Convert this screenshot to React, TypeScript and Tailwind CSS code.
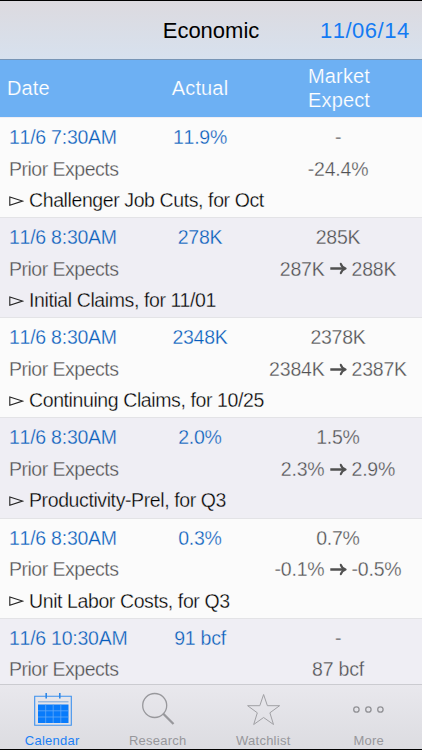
import React from "react";

type Release = {
  time: string;
  actual: string;
  expect: string;
  prior: string;
  revised?: string;
  title?: string;
};

const releases: Release[] = [
  { time: "11/6 7:30AM", actual: "11.9%", expect: "-", prior: "-24.4%", title: "Challenger Job Cuts, for Oct" },
  { time: "11/6 8:30AM", actual: "278K", expect: "285K", prior: "287K", revised: "288K", title: "Initial Claims, for 11/01" },
  { time: "11/6 8:30AM", actual: "2348K", expect: "2378K", prior: "2384K", revised: "2387K", title: "Continuing Claims, for 10/25" },
  { time: "11/6 8:30AM", actual: "2.0%", expect: "1.5%", prior: "2.3%", revised: "2.9%", title: "Productivity-Prel, for Q3" },
  { time: "11/6 8:30AM", actual: "0.3%", expect: "0.7%", prior: "-0.1%", revised: "-0.5%", title: "Unit Labor Costs, for Q3" },
  { time: "11/6 10:30AM", actual: "91 bcf", expect: "-", prior: "87 bcf" },
];

function Arrow() {
  return (
    <svg className="mx-[5px] h-[14px] w-[17px] shrink-0" viewBox="0 0 17 14" fill="none" stroke="#505050" strokeLinecap="round" strokeLinejoin="round">
      <path d="M0.3 6.5H14" strokeWidth="2.5" strokeLinecap="butt" />
      <path d="M10.8 1.8C11.6 4.2 13.2 5.8 15.6 6.5C13.2 7.2 11.6 8.8 10.8 11.2" strokeWidth="2.1" />
    </svg>
  );
}

function ReleaseRow({ item, shaded }: { item: Release; shaded: boolean }) {
  return (
    <div className={`h-[100.15px] shrink-0 border-b border-[#e3e3e6] pt-[4px] text-[19.5px] leading-[31.5px] ${shaded ? "bg-[#efeef4] [-webkit-text-stroke:0.3px_#efeef4]" : "bg-[#fbfbfb] [-webkit-text-stroke:0.3px_#fbfbfb]"}`}>
      <div className="grid grid-cols-[133px_116px_160px] pl-[9px] tracking-[-0.25px] [font-kerning:none]">
        <span className="whitespace-nowrap text-[#075cbb]">{item.time}</span>
        <span className="text-center text-[#075cbb]">{item.actual}</span>
        <span className="text-center text-[#505052]">{item.expect}</span>
      </div>
      <div className="grid grid-cols-[249px_160px] pl-[9px] text-[#505052]">
        <span className="tracking-[-0.5px]">Prior Expects</span>
        <span className="flex items-center justify-center whitespace-nowrap tracking-[-0.2px]">
          {item.prior}
          {item.revised && <Arrow />}
          {item.revised}
        </span>
      </div>
      {item.title && (
        <div className="flex items-center pl-[9px] tracking-[-0.4px] text-black">
          <svg className="mr-[5px] h-[10px] w-[15px]" viewBox="0 0 15 10" fill="none" stroke="#222" strokeWidth="1.1">
            <path d="M.8 1V9.2L13.5 5.1Z" />
          </svg>
          <span className="whitespace-nowrap">{item.title}</span>
        </div>
      )}
    </div>
  );
}

function CalendarIcon() {
  return (
    <svg className="h-[36px] w-[40px]" viewBox="0 0 40 36" fill="none">
      <path d="M1.7 4.2H38.3V33.3H1.7Z" stroke="#3c91ee" strokeWidth="1.1" />
      <path d="M5 9.8H35.5" stroke="#86aedb" strokeWidth="1.2" />
      <path d="M5 12.5H35.5V31H5Z" fill="#087bfb" />
      <path d="M12.7 12.5V31M20.2 12.5V31M27.8 12.5V31M5 18.8H35.5M5 25H35.5" stroke="#62aaf8" strokeWidth=".8" />
      <path d="M13.2 1V6.5M26.8 1V6.5" stroke="#2d87e8" strokeWidth="1.6" />
    </svg>
  );
}

function SearchIcon() {
  return (
    <svg className="h-[36px] w-[40px]" viewBox="0 0 40 36" fill="none" stroke="#98989c">
      <circle cx="16.7" cy="13.5" r="12" strokeWidth="1.3" />
      <path d="M25 21.5L35.5 32" strokeWidth="2.3" />
    </svg>
  );
}

function StarIcon() {
  return (
    <svg className="h-[36px] w-[40px]" viewBox="0 0 40 36" fill="none" stroke="#a0a0a4" strokeWidth="1">
      <path d="M19.6 2.5L23.4 13.7H35.6L25.9 20.8L29.5 32.5L19.6 25.5L9.7 32.5L13.3 20.8L3.6 13.7H15.8Z" />
    </svg>
  );
}

function MoreIcon() {
  return (
    <svg className="h-[36px] w-[40px]" viewBox="0 0 40 36" fill="none" stroke="#929296" strokeWidth="1.3">
      <circle cx="7.4" cy="17.5" r="2.7" />
      <circle cx="19.4" cy="17.5" r="2.7" />
      <circle cx="31.4" cy="17.5" r="2.7" />
    </svg>
  );
}

function Tab({ icon, label, active = false }: { icon: React.ReactNode; label: string; active?: boolean }) {
  return (
    <div className={`flex flex-col items-center pt-[7px] ${active ? "text-[#1a80f5]" : "text-[#97979b]"}`}>
      {icon}
      <span className="mt-[5px] mr-[1px] text-[13px] leading-[15px] tracking-[0.25px]">{label}</span>
    </div>
  );
}

export default function App() {
  return (
    <div className="flex h-[750px] w-[422px] flex-col overflow-hidden bg-[#efeef4] font-['Liberation_Sans',Arial,sans-serif]">
      <header className="grid h-[60px] shrink-0 grid-cols-[105px_212px_105px] items-center border-t border-b border-t-black border-b-[#7795b6] bg-linear-to-b from-[#dcdadf] to-[#d7e1ee] text-[22px]">
        <h1 className="col-start-2 text-center text-black">Economic</h1>
        <span className="pl-[3px] tracking-[0.5px] whitespace-nowrap text-[#147bf3] [font-kerning:none]">11/06/14</span>
      </header>
      <div className="grid h-[57px] shrink-0 grid-cols-[133px_118px_160px] items-center bg-[#6db0f3] pl-[7px] text-[20px] leading-[23.5px] tracking-[0.15px] text-white [-webkit-text-stroke:0.2px_#6db0f3]">
        <span>Date</span>
        <span className="pl-[2px] text-center">Actual</span>
        <span className="pl-[50px]">Market<br />Expect</span>
      </div>
      <main className="min-h-0 flex-1 overflow-hidden pt-[1px]">
        {releases.map((item, index) => (
          <ReleaseRow key={index} item={item} shaded={index % 2 === 1} />
        ))}
      </main>
      <nav className="grid h-[66px] shrink-0 grid-cols-4 border-t border-b border-t-[#cbcbd0] border-b-black bg-linear-to-b from-[#e9e8ed] to-[#dcdce1]">
        <Tab icon={<CalendarIcon />} label="Calendar" active />
        <Tab icon={<SearchIcon />} label="Research" />
        <Tab icon={<StarIcon />} label="Watchlist" />
        <Tab icon={<MoreIcon />} label="More" />
      </nav>
    </div>
  );
}
